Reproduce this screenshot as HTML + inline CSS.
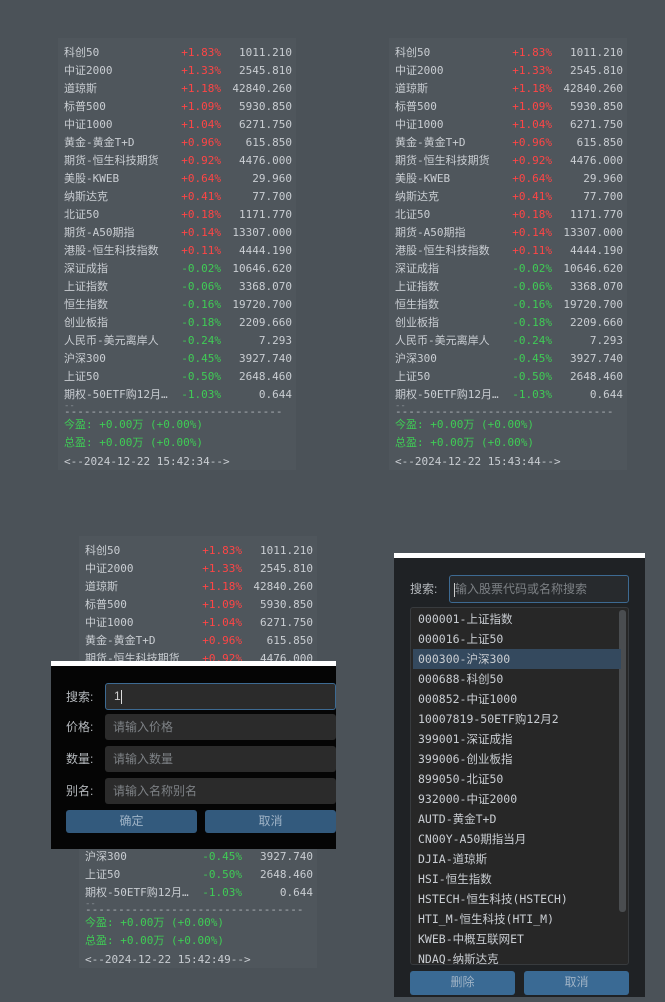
<!DOCTYPE html>
<html><head><meta charset="utf-8"><style>
*{margin:0;padding:0;box-sizing:border-box}
body{width:665px;height:1002px;background:#4b5258;position:relative;overflow:hidden;font-family:"DejaVu Sans Mono","Liberation Mono","Noto Sans CJK SC",monospace;font-size:11px;color:#c9cdd2}
.panel{position:absolute;background:#4f565c;width:238px;height:432px}
.row{position:absolute;left:6px;width:228px;height:18px;line-height:18px;white-space:nowrap}
.row .n{position:absolute;left:0}
.row .p{position:absolute;right:71px}
.row .v{position:absolute;right:0}
.r{color:#ff4545}.g{color:#3fcc55}
.abs{position:absolute;white-space:nowrap}
.dlg{position:absolute;background:#050505;border-top:5px solid #fff}
.inp{position:absolute;background:#2b2b2b;border-radius:3px;color:#7d8185;padding-left:8px;line-height:26px;font-family:"Liberation Sans","Noto Sans CJK SC",sans-serif;font-size:12px}
.lbl{position:absolute;font-family:"Liberation Sans","Noto Sans CJK SC",sans-serif;font-size:12px;color:#b5b9bd}
.btn{position:absolute;background:#335a7d;border-radius:3px;color:#9fb3c6;text-align:center;font-family:"Liberation Sans","Noto Sans CJK SC",sans-serif;font-size:12px;line-height:23px}
.item{position:absolute;left:2px;width:208px;height:20px;line-height:20px;padding-left:5px;font-size:11.5px;color:#c9cdd2;font-family:"DejaVu Sans Mono","Noto Sans CJK SC",monospace}
</style></head><body>

<div id="p1" class="panel" style="left:58px;top:38px"></div>
<div id="p2" class="panel" style="left:389px;top:38px"></div>
<div id="p3" class="panel" style="left:79px;top:536px"></div>

<script>
const rows=[["科创50","+1.83%","1011.210"],["中证2000","+1.33%","2545.810"],["道琼斯","+1.18%","42840.260"],["标普500","+1.09%","5930.850"],["中证1000","+1.04%","6271.750"],["黄金-黄金T+D","+0.96%","615.850"],["期货-恒生科技期货","+0.92%","4476.000"],["美股-KWEB","+0.64%","29.960"],["纳斯达克","+0.41%","77.700"],["北证50","+0.18%","1171.770"],["期货-A50期指","+0.14%","13307.000"],["港股-恒生科技指数","+0.11%","4444.190"],["深证成指","-0.02%","10646.620"],["上证指数","-0.06%","3368.070"],["恒生指数","-0.16%","19720.700"],["创业板指","-0.18%","2209.660"],["人民币-美元离岸人","-0.24%","7.293"],["沪深300","-0.45%","3927.740"],["上证50","-0.50%","2648.460"],["期权-50ETF购12月…","-1.03%","0.644"]];
function fill(id,ts){const p=document.getElementById(id);let h='';
rows.forEach((r,i)=>{h+=`<div class="row" style="top:${6+i*18}px"><span class="n">${r[0]}</span><span class="p ${r[1][0]=='+'?'r':'g'}">${r[1]}</span><span class="v">${r[2]}</span></div>`});
h+=`<div class="abs" style="left:6px;top:363px;font-size:9px;color:#8a9096;line-height:10px">--</div>`;
h+=`<div class="abs" style="left:6px;top:367px;color:#b0b5ba;line-height:14px">---------------------------------</div>`;
h+=`<div class="abs g" style="left:6px;top:378px;line-height:18px">今盈: +0.00万 (+0.00%)</div>`;
h+=`<div class="abs g" style="left:6px;top:396px;line-height:18px">总盈: +0.00万 (+0.00%)</div>`;
h+=`<div class="abs" style="left:6px;top:415px;line-height:18px">&lt;--2024-12-22 ${ts}--&gt;</div>`;
p.innerHTML=h;}
fill('p1','15:42:34');fill('p2','15:43:44');fill('p3','15:42:49');
</script>

<div class="dlg" style="left:51px;top:661px;width:285px;height:188px">
 <div class="lbl" style="left:15px;top:18px;line-height:26px">搜索:</div>
 <div class="inp" style="left:54px;top:17px;width:231px;height:27px;border:1px solid #3d6a92;color:#d0d0d0;line-height:25px">1<span style="display:inline-block;width:1px;height:14px;background:#ddd;vertical-align:middle"></span></div>
 <div class="lbl" style="left:15px;top:48px;line-height:26px">价格:</div>
 <div class="inp" style="left:54px;top:48px;width:231px;height:26px">请输入价格</div>
 <div class="lbl" style="left:15px;top:80px;line-height:26px">数量:</div>
 <div class="inp" style="left:54px;top:80px;width:231px;height:26px">请输入数量</div>
 <div class="lbl" style="left:15px;top:112px;line-height:26px">别名:</div>
 <div class="inp" style="left:54px;top:112px;width:231px;height:26px">请输入名称别名</div>
 <div class="btn" style="left:15px;top:144px;width:131px;height:23px">确定</div>
 <div class="btn" style="left:154px;top:144px;width:131px;height:23px">取消</div>
</div>

<div class="dlg" style="left:394px;top:553px;width:251px;height:444px;background:#1f2225">
 <div class="lbl" style="left:16px;top:17px;line-height:28px">搜索:</div>
 <div class="inp" style="left:55px;top:17px;width:180px;height:28px;border:1px solid #3d6a92;line-height:26px;background:#272a2d;padding-left:4px"><span style="display:inline-block;width:1px;height:14px;background:#ccc;vertical-align:middle"></span>输入股票代码或名称搜索</div>
 <div style="position:absolute;left:16px;top:49px;width:219px;height:358px;background:#272727;border:1px solid #383b3e;border-radius:3px;overflow:hidden">
  <div style="position:absolute;right:2px;top:2px;width:7px;height:302px;background:#4a4d50;border-radius:3px"></div>
  <script>
  const items=["000001-上证指数","000016-上证50","000300-沪深300","000688-科创50","000852-中证1000","10007819-50ETF购12月2","399001-深证成指","399006-创业板指","899050-北证50","932000-中证2000","AUTD-黄金T+D","CN00Y-A50期指当月","DJIA-道琼斯","HSI-恒生指数","HSTECH-恒生科技(HSTECH)","HTI_M-恒生科技(HTI_M)","KWEB-中概互联网ET","NDAQ-纳斯达克"];
  document.write(items.map((t,i)=>`<div class="item" style="top:${1+i*20}px;${i==2?'background:#34495e;':''}">${t}</div>`).join(''));
  </script>
 </div>
 <div class="btn" style="left:16px;top:413px;width:105px;height:24px;background:#3a6a94">删除</div>
 <div class="btn" style="left:130px;top:413px;width:105px;height:24px;background:#3a6a94">取消</div>
</div>
</body></html>
